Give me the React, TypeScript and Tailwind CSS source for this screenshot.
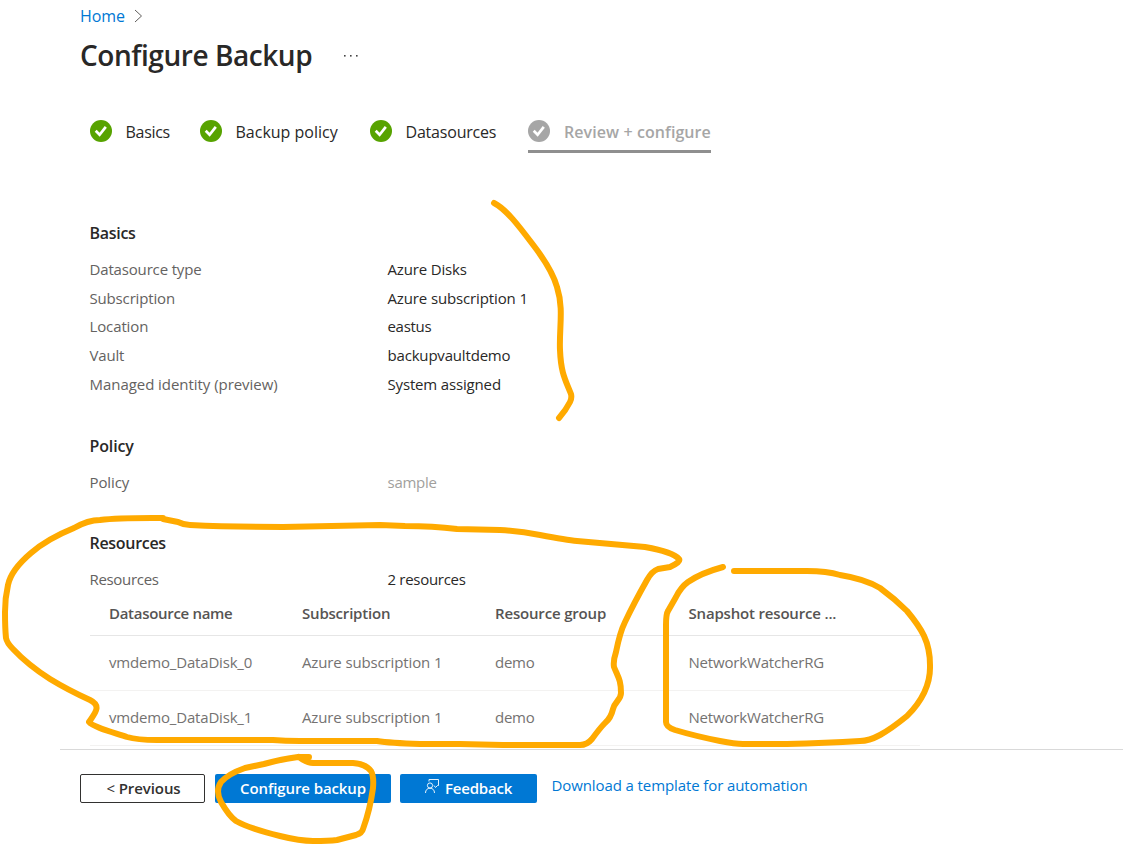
import React from "react";

type StepProps = { label: string; labelClass: string; className?: string };

function CheckBadge({ className }: { className: string }) {
  return (
    <svg viewBox="0 0 22 22" className={`h-[22px] w-[22px] shrink-0 ${className}`}>
      <circle cx="11" cy="11" r="11" fill="currentColor" />
      <path d="M5.7 10.8 L9.6 14.8 L15.8 6.8" fill="none" stroke="#fff" strokeWidth="2.7" />
    </svg>
  );
}

function Step({ label, labelClass, className = "" }: StepProps) {
  return (
    <div className={`flex h-[33px] items-start ${className}`}>
      <CheckBadge className="text-[#57a300]" />
      <span className={`ml-[13.5px] text-[16px] leading-[24px] ${labelClass}`}>{label}</span>
    </div>
  );
}

const basics = [
  { label: "Datasource type", value: "Azure Disks", l: "tracking-[-0.16px]", v: "tracking-[-0.16px]" },
  { label: "Subscription", value: "Azure subscription 1", l: "tracking-[-0.16px]", v: "tracking-[-0.13px]" },
  { label: "Location", value: "eastus", l: "tracking-[-0.12px]", v: "tracking-[-0.3px]" },
  { label: "Vault", value: "backupvaultdemo", l: "tracking-[-0.16px]", v: "tracking-[-0.18px]" },
  { label: "Managed identity (preview)", value: "System assigned", l: "tracking-[-0.05px]", v: "tracking-[-0.16px]" },
];

const disks = ["vmdemo_DataDisk_0", "vmdemo_DataDisk_1"];

function SummaryRow({ label, value, l, v, valueColor = "text-[#292827]" }: { label: string; value: string; l: string; v: string; valueColor?: string }) {
  return (
    <div className="flex h-[28.75px] items-center text-[15px] leading-5">
      <span className={`w-[298px] text-[#646261] ${l}`}>{label}</span>
      <span className={`${v} ${valueColor}`}>{value}</span>
    </div>
  );
}

function Heading({ children, className }: { children: React.ReactNode; className: string }) {
  return <h2 className={`h-5 text-[16px] leading-[22px] font-semibold text-[#292827] ${className}`}>{children}</h2>;
}

function Annotations() {
  return (
    <svg
      className="pointer-events-none absolute inset-0 h-[846px] w-[1123px]"
      viewBox="0 0 1123 846"
      fill="none"
      stroke="#ffaa00"
      strokeWidth="6"
      strokeLinecap="round"
      strokeLinejoin="round"
    >
      <path d="M494 203 C508 210 524 233 537 250 C545 261 554 276 557 287 C564 309 559 328 560 350 C561 373 565 379 571 394 Q572 398 570 402 Q566 410 559 418" />
      <path d="M163 518 L152 518 Q116 518 100 520 Q88 520 74 528 Q47 539 31 553 Q11 570 8 585 Q5 598 5 612 Q5 628 6 638 Q7 643 13 649 Q28 665 50 679 Q68 690 90 700 C102 706 95 713 89 722 C93 727 112 732 127 737 Q137 740 157 740 L273 740 Q285 741 300 741 L377 741 Q390 743 420 744 L460 744 L503 745 L580 745 Q587 745 592 739 Q600 728 605 723 Q611 718 613 709 C615 701 621 700 621 693 C621 680 618 677 614 667 Q613 661 616 652 Q620 632 625 622 Q634 603 647 580 Q652 571 658 569 L670 567 Q681 562 679 559 Q673 552 645 547 L577 541 Q567 540 540 535 Q520 531 500 530 L457 529 Q433 526 405 526 L380 525 Q333 526 283 527 Q230 527 190 525 Q184 525 178 522 L163 519" />
      <path d="M723 567 Q701 573 688 582 Q681 587 676 597 L668 611 Q666 614 666 625 Q666 631 666 645 L666 722 Q666 727 675 730 Q695 736 720 741 Q735 744 743 744 L787 744 Q826 743 860 741 Q869 741 880 735 Q891 729 907 716 Q931 692 930 665 C930 642 922 629 907 611 Q895 599 880 588 Q865 579 840 575 Q827 571 807 571 L734 571" />
      <path d="M309 757 L298 757 Q282 759 264 764 L245 768 Q228 774 221 782 Q215 791 221 802 Q229 816 236 821 Q248 828 280 836 Q300 841 313 841 Q329 841 337 840 L356 835 Q362 833 363 829 Q370 810 373 788 Q374 776 371 771 Q366 764 353 763 L313 763 Q307 763 299 757" />
    </svg>
  );
}

export default function App() {
  return (
    <div className="relative flex h-[846px] w-[1123px] flex-col overflow-hidden bg-white font-['Open_Sans','Noto_Sans',sans-serif]">
      <header className="pl-20">
        <nav className="flex h-8 items-center gap-2 text-[16px] leading-8 text-[#0078d4]">
          <a className="w-[45.5px] tracking-[-0.1px]">Home</a>
          <svg viewBox="0 0 9 14" className="h-[14px] w-[9px]" fill="none" stroke="#605e5c" strokeWidth="1">
            <path d="M1 1 L7.5 7 L1 13" />
          </svg>
        </nav>
        <div className="flex h-12 items-center">
          <h1 className="h-12 w-[264px] text-[28px] leading-[46px] font-semibold tracking-[-0.44px] whitespace-nowrap text-[#292827]">Configure Backup</h1>
          <svg viewBox="0 0 14 2" className="h-[2px] w-[14px]" fill="#444">
            <rect x="0" y="0" width="1.6" height="1.6" />
            <rect x="6" y="0" width="1.6" height="1.6" />
            <rect x="12" y="0" width="1.6" height="1.6" />
          </svg>
        </div>
      </header>

      <div className="mt-10 flex pl-[90px] text-[#292827]">
        <Step label="Basics" labelClass="tracking-[-0.3px]" className="w-[110px]" />
        <Step label="Backup policy" labelClass="tracking-[0px]" className="w-[170px]" />
        <Step label="Datasources" labelClass="tracking-[-0.2px]" className="w-[158px]" />
        <div className="flex h-[33px] w-[183px] items-start border-b-[3px] border-[#8f8f8f] whitespace-nowrap text-[#a6a6a6]">
          <CheckBadge className="text-[#a6a6a6]" />
          <span className="ml-[14px] text-[16px] leading-[24px] font-semibold tracking-[0.08px]">Review + configure</span>
        </div>
      </div>

      <main className="h-[596px] shrink-0 pt-[69px] pl-[89.5px]">
        <section>
          <Heading className="tracking-[-0.3px]">Basics</Heading>
          <div className="mt-[12.5px]">
            {basics.map((row) => (
              <SummaryRow key={row.label} {...row} />
            ))}
          </div>
        </section>
        <section className="mt-[36.75px]">
          <Heading className="tracking-[-0.12px]">Policy</Heading>
          <div className="mt-[13px]">
            <SummaryRow label="Policy" value="sample" l="tracking-[-0.1px]" v="tracking-[-0.25px]" valueColor="text-[#a19f9d]" />
          </div>
        </section>
        <section className="mt-[35px]">
          <Heading className="tracking-[-0.3px]">Resources</Heading>
          <div className="mt-[13px]">
            <SummaryRow label="Resources" value="2 resources" l="tracking-[-0.32px]" v="tracking-[-0.3px]" />
          </div>
          <div className="w-[830.5px] text-[15px] leading-5 whitespace-nowrap">
            <div className="grid h-[42px] grid-cols-[193px_193px_193.5px_1fr] items-start border-b border-[#e6e6e6] pt-[9px] pl-[19.5px] font-semibold text-[#565453]">
              <span className="tracking-[-0.3px]">Datasource name</span>
              <span className="tracking-[-0.2px]">Subscription</span>
              <span className="tracking-[-0.17px]">Resource group</span>
              <span className="tracking-[-0.18px]">Snapshot resource ...</span>
            </div>
            {disks.map((disk) => (
              <div key={disk} className="grid h-[55px] grid-cols-[193px_193px_193.5px_1fr] items-start border-b border-[#f3f2f1] pt-[16px] pl-[19.5px] text-[#747271]">
                <span className="tracking-[-0.18px]">{disk}</span>
                <span className="tracking-[-0.13px]">Azure subscription 1</span>
                <span className="tracking-[-0.25px]">demo</span>
                <span className="tracking-[-0.18px]">NetworkWatcherRG</span>
              </div>
            ))}
          </div>
        </section>
      </main>

      <footer className="ml-[60px] flex h-[97px] shrink-0 items-start border-t border-[#d9d9d9] pt-6 pl-5 text-[15px] whitespace-nowrap">
        <button className="h-[29px] w-[125px] rounded-[2px] border border-[#323130] pl-[2px] leading-[27px] font-semibold tracking-[-0.08px] text-[#323130]"><span className="font-normal">&lt;</span> Previous</button>
        <button className="ml-[10px] h-[29px] w-[176px] rounded-[2px] bg-[#0078d4] leading-[29px] font-semibold tracking-[-0.1px] text-white">Configure backup</button>
        <button className="ml-[9px] flex h-[29px] w-[137px] rounded-[2px] bg-[#0078d4] pl-[25px] leading-[29px] font-semibold text-white">
          <svg viewBox="0 0 14 14" className="mt-[5px] mr-[6px] h-[14px] w-[14px]" fill="none" stroke="#fff" strokeWidth="0.9">
            <path d="M4 2.5 V0.5 H13.5 V6.5 H12.5 L10.5 8.5 L9 6.5" />
            <circle cx="5" cy="6.5" r="2.6" />
            <path d="M0.5 14 C0.5 11 2.3 9.2 5 9.2 C7.7 9.2 9.5 11 9.5 14" />
          </svg>
          <span className="tracking-[-0.2px]">Feedback</span>
        </button>
        <a className="ml-[14.5px] leading-[22px] tracking-[-0.1px] text-[#0078d4]">Download a template for automation</a>
      </footer>

      <Annotations />
    </div>
  );
}
